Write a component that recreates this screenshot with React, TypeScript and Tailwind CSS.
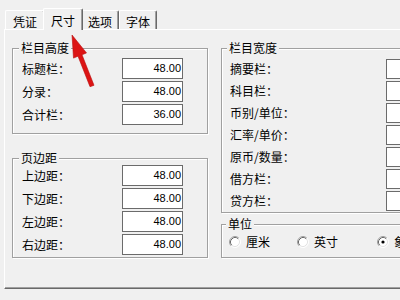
import React from "react";

function Box({ value, h }: { value: string; h: string }) {
  return (
    <div
      className={`${h} w-[61px] shrink-0 border border-[#6b6b6b] bg-white pr-[1px] text-right text-[11px] leading-[19px] [font-family:'Liberation_Sans',Arial,sans-serif]`}
    >
      {value}
    </div>
  );
}

function Row({ label, value, lw, h }: { label: string; value: string; lw: string; h: string }) {
  return (
    <div className={`flex items-center ${h}`}>
      <div className={`${lw} shrink-0`}>{label}</div>
      <Box value={value} h={h} />
    </div>
  );
}

function Radio({ checked }: { checked?: boolean }) {
  return (
    <svg width="12" height="12" viewBox="0 0 12 12" className="shrink-0">
      <circle cx="6" cy="6" r="5" fill="#fff" />
      <path d="M2.11 9.89 A5.5 5.5 0 0 1 9.89 2.11" fill="none" stroke="#a0a0a0" />
      <path d="M9.89 2.11 A5.5 5.5 0 0 1 2.11 9.89" fill="none" stroke="#ffffff" />
      <path d="M2.82 9.18 A4.5 4.5 0 0 1 9.18 2.82" fill="none" stroke="#696969" />
      <path d="M9.18 2.82 A4.5 4.5 0 0 1 2.82 9.18" fill="none" stroke="#e3e3e3" />
      {checked && <circle cx="6" cy="6" r="1.6" fill="#000" />}
    </svg>
  );
}

const groupCls =
  "border border-[#a0a0a0] shadow-[inset_1px_1px_0_#fff,1px_1px_0_#fff]";
const legendCls = "-ml-[3px] bg-[#f0f0f0] px-[2px] leading-[14px]";
const tabCls =
  "h-[19px] rounded-t-[2px] border-l border-t border-r border-l-white border-t-white border-r-[#696969] pt-[4px] text-center shadow-[inset_-1px_0_0_#a0a0a0]";

export default function App() {
  return (
    <div className="relative h-[300px] w-[400px] overflow-hidden bg-[#f0f0f0] text-[12px] leading-[14px] text-black [font-family:'Noto_Sans_CJK_SC','Liberation_Sans',sans-serif]">
      {/* tab strip */}
      <div className="flex h-[29px] items-end pl-[5px]">
        <div className={`${tabCls} w-[40px]`}>凭证</div>
        <div className="relative z-10 -mx-[2px] -mb-[1px] h-[22px] w-[40px] rounded-t-[2px] border-l border-t border-r border-l-white border-t-white border-r-[#696969] bg-[#f0f0f0] pt-[5px] text-center shadow-[inset_-1px_0_0_#a0a0a0]">
          尺寸
        </div>
        <div className={`${tabCls} w-[38px]`}>选项</div>
        <div className={`${tabCls} w-[38px]`}>字体</div>
      </div>

      {/* page */}
      <div className="ml-[4px] flex h-[260px] gap-[13px] border-b border-l border-t border-b-[#696969] border-l-white border-t-white pl-[7px] shadow-[inset_0_-1px_0_#a0a0a0]">
        <div className="flex w-[196px] shrink-0 flex-col">
          <fieldset className={`${groupCls} mt-[11px] pb-[8px] pl-[9px] pt-[3px]`}>
            <legend className={legendCls}>栏目高度</legend>
            <div className="flex flex-col gap-[2px]">
              <Row label="标题栏：" value="48.00" lw="w-[100px]" h="h-[21px]" />
              <Row label="分录：" value="48.00" lw="w-[100px]" h="h-[21px]" />
              <Row label="合计栏：" value="36.00" lw="w-[100px]" h="h-[21px]" />
            </div>
          </fieldset>
          <fieldset className={`${groupCls} mt-[17px] pb-[2px] pl-[9px]`}>
            <legend className={legendCls}>页边距</legend>
            <div className="flex flex-col gap-[2px]">
              <Row label="上边距：" value="48.00" lw="w-[100px]" h="h-[21px]" />
              <Row label="下边距：" value="48.00" lw="w-[100px]" h="h-[21px]" />
              <Row label="左边距：" value="48.00" lw="w-[100px]" h="h-[21px]" />
              <Row label="右边距：" value="48.00" lw="w-[100px]" h="h-[21px]" />
            </div>
          </fieldset>
        </div>

        <div className="flex w-[240px] shrink-0 flex-col">
          <fieldset className={`${groupCls} mt-[11px] pb-[1px] pl-[8px] pt-[4px]`}>
            <legend className={legendCls}>栏目宽度</legend>
            <div className="flex flex-col gap-[2px]">
              <Row label="摘要栏：" value="" lw="w-[156px]" h="h-[20px]" />
              <Row label="科目栏：" value="" lw="w-[156px]" h="h-[20px]" />
              <Row label="币别/单位：" value="" lw="w-[156px]" h="h-[20px]" />
              <Row label="汇率/单价：" value="" lw="w-[156px]" h="h-[20px]" />
              <Row label="原币/数量：" value="" lw="w-[156px]" h="h-[20px]" />
              <Row label="借方栏：" value="" lw="w-[156px]" h="h-[20px]" />
              <Row label="贷方栏：" value="" lw="w-[156px]" h="h-[20px]" />
            </div>
          </fieldset>
          <fieldset className={`${groupCls} mt-[4px] pb-[8px] pl-[7px] pt-[4px]`}>
            <legend className={legendCls}>单位</legend>
            <div className="flex h-[14px] items-center">
              <div className="flex w-[68px] shrink-0 items-center gap-[5px]">
                <Radio />
                <span>厘米</span>
              </div>
              <div className="flex w-[80px] shrink-0 items-center gap-[5px]">
                <Radio />
                <span>英寸</span>
              </div>
              <div className="flex shrink-0 items-center gap-[5px]">
                <Radio checked />
                <span>象素</span>
              </div>
            </div>
          </fieldset>
        </div>
      </div>

      {/* red annotation arrow */}
      <svg
        className="pointer-events-none absolute left-0 top-0"
        width="400"
        height="300"
        viewBox="0 0 400 300"
      >
        <polygon
          points="72,35 86.5,52.9 82,54.8 94,85.3 90,86.7 78,56.2 73.5,58.1"
          fill="#dc1414"
          stroke="#b80c0c"
          strokeWidth="0.6"
          strokeLinejoin="round"
        />
      </svg>
    </div>
  );
}
